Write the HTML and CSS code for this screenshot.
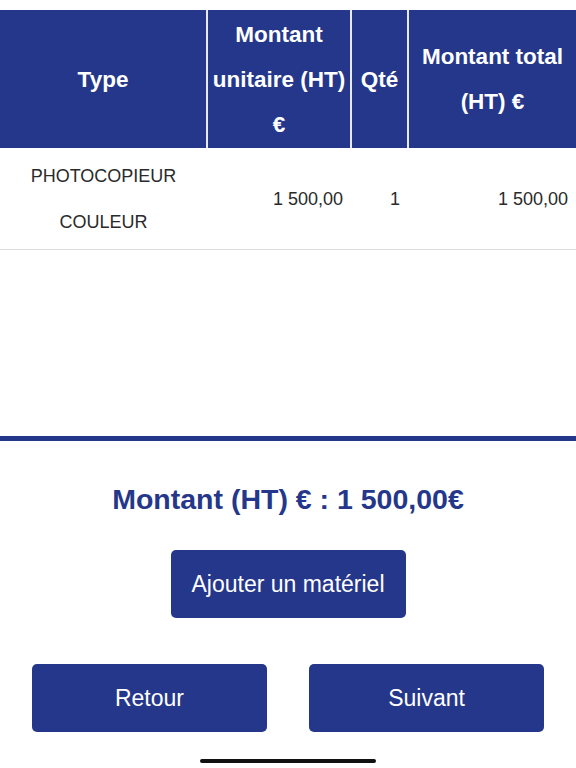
FILE: index.html
```html
<!DOCTYPE html>
<html lang="fr">
<head>
<meta charset="utf-8">
<link rel="stylesheet" href="styles.css">
</head>
<body>
<div class="screen">
  <table class="grid">
    <colgroup>
      <col class="c1"><col class="c2"><col class="c3"><col class="c4">
    </colgroup>
    <thead>
      <tr>
        <th>Type</th>
        <th>Montant unitaire (HT) €</th>
        <th>Qté</th>
        <th>Montant total (HT) €</th>
      </tr>
    </thead>
    <tbody>
      <tr>
        <td class="type">PHOTOCOPIEUR COULEUR</td>
        <td class="num">1 500,00</td>
        <td class="num">1</td>
        <td class="num">1 500,00</td>
      </tr>
    </tbody>
  </table>
  <div class="spacer"></div>
  <div class="bar"></div>
  <div class="total">Montant (HT) € : 1 500,00€</div>
  <div class="add-row"><button class="btn add">Ajouter un matériel</button></div>
  <div class="nav-row">
    <button class="btn">Retour</button>
    <button class="btn">Suivant</button>
  </div>
  <div class="home"></div>
</div>
</body>
</html>
```

FILE: styles.css
```css
html, body { margin: 0; padding: 0; background: #fff; }
body { font-family: "Liberation Sans", Arial, sans-serif; }
.screen { width: 576px; height: 768px; display: flex; flex-direction: column; padding-top: 10px; box-sizing: border-box; }
.grid { border-collapse: collapse; width: 576px; table-layout: fixed; }
.c1 { width: 207px; } .c2 { width: 144px; } .c3 { width: 57px; } .c4 { width: 168px; }
.grid th { background: #25378b; color: #fff; font-weight: bold; font-size: 22.5px; line-height: 45px; height: 138px; padding: 0 2px; box-sizing: border-box; border-left: 2px solid #e8eaf2; vertical-align: middle; text-align: center; }
.grid th:first-child { border-left: none; }
.grid td { font-size: 18px; line-height: 46px; color: #2a2a2a; height: 101px; border-bottom: 1px solid #dcdcdc; padding: 0; }
.grid td.type { text-align: center; padding: 0 20px; }
.grid td.num { text-align: right; padding-right: 8px; }
.spacer { height: 186px; }
.bar { height: 5px; background: #25378b; }
.total { color: #25378b; font-weight: bold; font-size: 28.5px; text-align: center; margin-top: 40px; line-height: 36px; }
.add-row { display: flex; justify-content: center; margin-top: 33px; }
.btn { background: #25378b; color: #fff; border: none; border-radius: 5px; font-family: "Liberation Sans", Arial, sans-serif; font-size: 23px; height: 68px; width: 235px; padding: 0; }
.nav-row { display: flex; justify-content: space-between; padding: 0 32px 0 32px; margin-top: 46px; }
.home { width: 176px; height: 4px; border-radius: 2px; background: #111; margin: 27px auto 0; }
```
